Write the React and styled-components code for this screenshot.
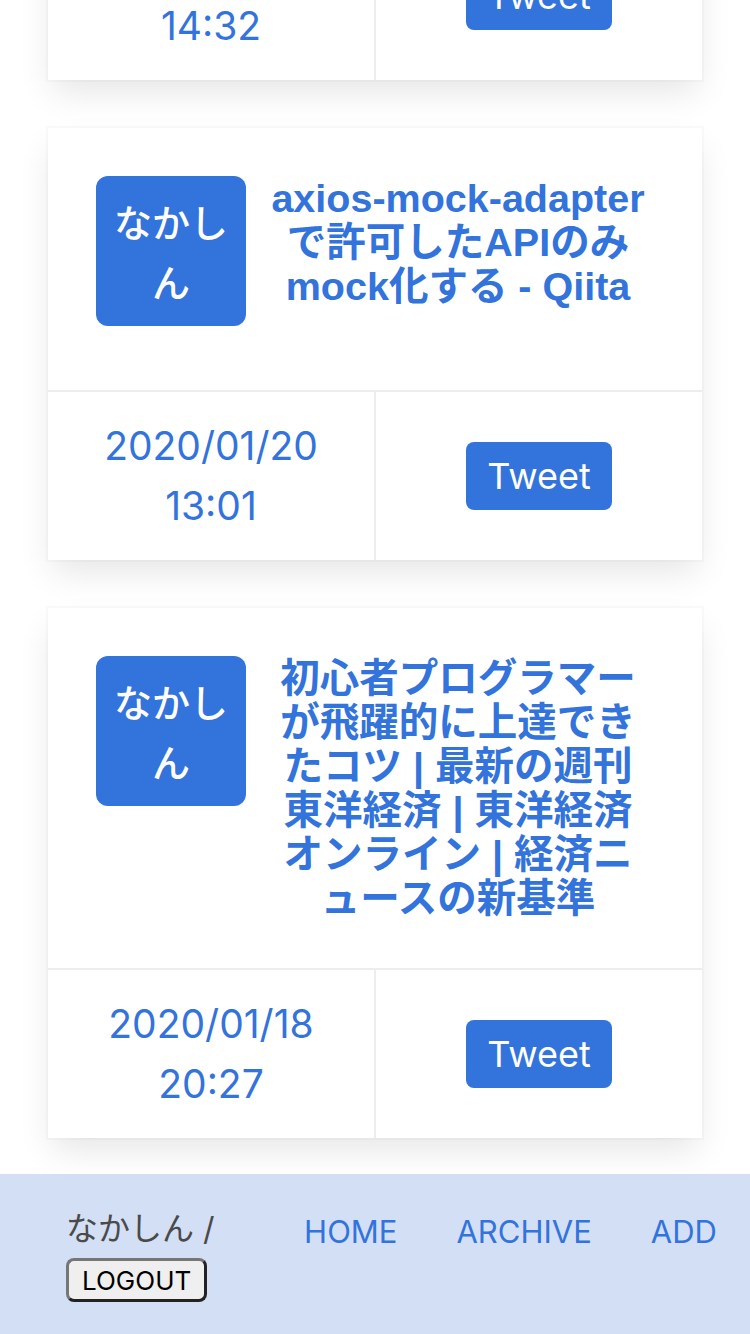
import React from 'react'
import styled, { createGlobalStyle } from 'styled-components'

const GlobalStyle = createGlobalStyle`
  html, body {
    margin: 0;
    padding: 0;
    background: #fff;
    overflow: hidden;
  }
  body {
    font-family: Inter, "Noto Sans CJK JP", sans-serif;
    color: #4a4a4a;
  }
`

const LINK = '#3273dc'

const Page = styled.div`
  width: 750px;
  height: 1334px;
  overflow: hidden;
`

// the screenshot is scrolled: the first card is mostly above the fold
const List = styled.div`
  display: flex;
  flex-direction: column;
  gap: 48px;
  margin-top: -352px;
  padding: 0 48px;
`

const Card = styled.div`
  background: #fff;
  box-shadow: 0 16px 32px -4px rgba(10, 10, 10, 0.1),
    0 0 0 2px rgba(10, 10, 10, 0.02);
`

const Content = styled.div`
  display: flex;
  align-items: flex-start;
  padding: 48px;
`

const Avatar = styled.div`
  flex: 0 0 150px;
  height: 150px;
  margin-bottom: 16px;
  border-radius: 12px;
  background: ${LINK};
  color: #fff;
  font-family: "Noto Sans CJK JP", sans-serif;
  font-size: 38px;
  font-weight: 500;
  line-height: 60px;
  display: flex;
  align-items: center;
  justify-content: center;
  text-align: center;
`

const Title = styled.a`
  flex: 1;
  padding: 0 8px 0 24px;
  text-align: center;
  color: ${LINK};
  font-family: "Liberation Sans", "Noto Sans CJK JP", sans-serif;
  font-size: 39.5px;
  font-weight: 700;
  line-height: 44px;
  text-decoration: none;
  line-break: loose;
`

const Footer = styled.div`
  display: flex;
  border-top: 2px solid #ededed;
`

const FooterItem = styled.div`
  flex: 1;
  padding: 24px;
  display: flex;
  align-items: center;
  justify-content: center;
  & + & {
    border-left: 2px solid #ededed;
  }
`

const DateText = styled.span`
  color: ${LINK};
  font-size: 39px;
  line-height: 60px;
  text-align: center;
`

const TweetButton = styled.button`
  height: 68px;
  padding: 0 21px;
  border: none;
  border-radius: 8px;
  background: ${LINK};
  color: #fff;
  font-family: inherit;
  font-size: 36px;
`

const NavBar = styled.nav`
  margin-top: 36px;
  height: 160px;
  background: #d3dff5;
  display: flex;
  align-items: flex-start;
  padding: 32px 33px 0 66px;
`

const UserBlock = styled.div`
  display: flex;
  flex-direction: column;
  align-items: flex-start;
`

const UserName = styled.span`
  font-size: 32px;
  line-height: 46px;
  color: #4a4a4a;
`

const LogoutButton = styled.button`
  margin-top: 6px;
  height: 44px;
  padding: 0 13px;
  background: #efefef;
  border: 3px solid;
  border-color: #767676 #222 #222 #767676;
  border-radius: 8px;
  color: #000;
  font-family: inherit;
  font-size: 26px;
`

const NavLinks = styled.div`
  margin-left: auto;
  display: flex;
  gap: 59px;
`

const NavLink = styled.a`
  font-size: 31px;
  line-height: 52px;
  color: ${LINK};
  text-decoration: none;
`

const posts = [
  {
    title: 'Nuxt.jsでFirebase Authenticationを使う',
    date: '2020/01/21 14:32',
  },
  {
    title: 'axios-mock-adapterで許可したAPIのみmock化する - Qiita',
    date: '2020/01/20 13:01',
  },
  {
    title:
      '初心者プログラマーが飛躍的に上達できたコツ | 最新の週刊東洋経済 | 東洋経済オンライン | 経済ニュースの新基準',
    date: '2020/01/18 20:27',
  },
]

const App = () => {
  return (
    <Page>
      <GlobalStyle />
      <List>
        {posts.map((post) => (
          <Card key={post.date}>
            <Content>
              <Avatar>なかしん</Avatar>
              <Title href='#'>{post.title}</Title>
            </Content>
            <Footer>
              <FooterItem>
                <DateText>{post.date}</DateText>
              </FooterItem>
              <FooterItem>
                <TweetButton>Tweet</TweetButton>
              </FooterItem>
            </Footer>
          </Card>
        ))}
      </List>
      <NavBar>
        <UserBlock>
          <UserName>なかしん /</UserName>
          <LogoutButton>LOGOUT</LogoutButton>
        </UserBlock>
        <NavLinks>
          <NavLink href='#'>HOME</NavLink>
          <NavLink href='#'>ARCHIVE</NavLink>
          <NavLink href='#'>ADD</NavLink>
        </NavLinks>
      </NavBar>
    </Page>
  )
}

export default App
